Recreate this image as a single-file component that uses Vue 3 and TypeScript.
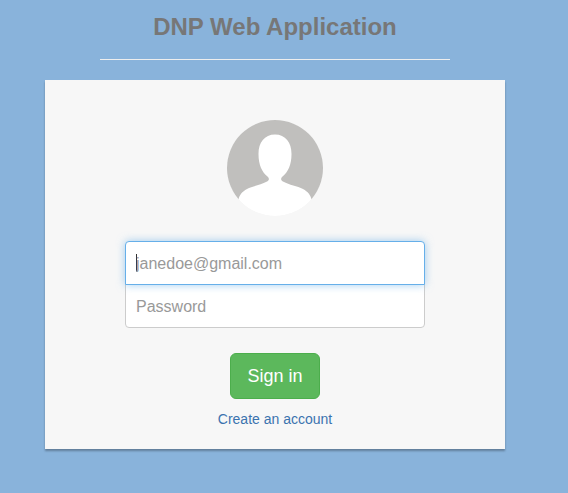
<script setup lang="ts">
import { ref } from 'vue'

const email = ref('')
const password = ref('')
</script>

<template>
  <main class="page">
    <header class="page-header">
      <h1>DNP Web Application</h1>
    </header>
    <section class="card">
      <svg class="avatar" viewBox="0 0 96 96" aria-hidden="true">
        <defs>
          <clipPath id="avatar-clip"><circle cx="48" cy="48" r="48" /></clipPath>
        </defs>
        <g clip-path="url(#avatar-clip)">
          <circle cx="48" cy="48" r="48" fill="#fff" />
          <path
            fill="#c0bfbd"
            fill-rule="evenodd"
            d="M0 0H96V79.500H84.500C83.500 75 81 71.700 76 69C70.500 66 62 65 56.500 61.800C53.700 60.200 53.300 58.500 55.500 56.500C61 52 64.500 45 64.500 34C64.500 22.500 58.500 14.500 48 14.500C37.500 14.500 31.500 22.500 31.500 34C31.500 45 35 52 40.500 56.500C42.700 58.500 42.300 60.200 39.500 61.800C34 65 25.500 66 20 69C15 71.700 12.500 75 11.500 79.500H0Z"
          />
        </g>
      </svg>
      <form class="login" @submit.prevent>
        <input v-model="email" class="field email" type="email" aria-label="Email" placeholder="janedoe@gmail.com" />
        <input v-model="password" class="field password" type="password" aria-label="Password" placeholder="Password" />
        <button class="submit" type="submit">Sign in</button>
      </form>
      <a class="create" href="#">Create an account</a>
    </section>
  </main>
</template>

<style>
body {
  background: #89b3db;
}
</style>

<style scoped>
.page {
  box-sizing: border-box;
  display: flex;
  flex-direction: column;
  align-items: center;
  gap: 20px;
  padding: 10px 18px 43px 0;
  font-family: "Helvetica Neue", "Liberation Sans", Arial, sans-serif;
}

.page-header {
  box-sizing: border-box;
  width: 100%;
  max-width: 350px;
  padding-bottom: 16px;
  border-bottom: 1px solid #eee;
  text-align: center;
}

h1 {
  margin: 0;
  color: #777;
  font-size: 24px;
  line-height: 33px;
}

.card {
  box-sizing: border-box;
  display: flex;
  flex-direction: column;
  align-items: center;
  width: 100%;
  max-width: 460px;
  padding: 40px 20px 20px;
  background: #f7f7f7;
  box-shadow: 0 2px 2px rgba(0, 0, 0, 0.3);
}

.avatar {
  width: 96px;
  height: 96px;
}

.login {
  display: flex;
  flex-direction: column;
  align-items: center;
  width: 100%;
  max-width: 300px;
  margin: 25px 0 10px;
}

.field {
  box-sizing: border-box;
  width: 100%;
  height: 44px;
  padding: 12px 10px 10px;
  border: 1px solid #ccc;
  background-color: #fff;
  color: #555;
  font: 16px "Helvetica Neue", "Liberation Sans", Arial, sans-serif;
  outline: 0;
}

.field::placeholder {
  color: #999;
  opacity: 1;
}

.email {
  position: relative;
  z-index: 1;
  border-color: #66afe9;
  border-radius: 4px 4px 0 0;
  /* text cursor at the start of the field */
  background-image: linear-gradient(#333, #333);
  background-repeat: no-repeat;
  background-position: 10px 12px;
  background-size: 1px 18px;
  box-shadow: 0 0 8px rgba(102, 175, 233, 0.6);
}

.password {
  margin-top: -1px;
  border-radius: 0 0 4px 4px;
}

.submit {
  height: 46px;
  margin-top: 25px;
  padding: 0 16px;
  border: 1px solid #4cae4c;
  border-radius: 6px;
  background: #5cb85c;
  color: #fff;
  font: 18px "Helvetica Neue", "Liberation Sans", Arial, sans-serif;
  cursor: pointer;
}

.create {
  color: #3b73af;
  font-size: 14px;
  line-height: 20px;
  text-decoration: none;
}
</style>
